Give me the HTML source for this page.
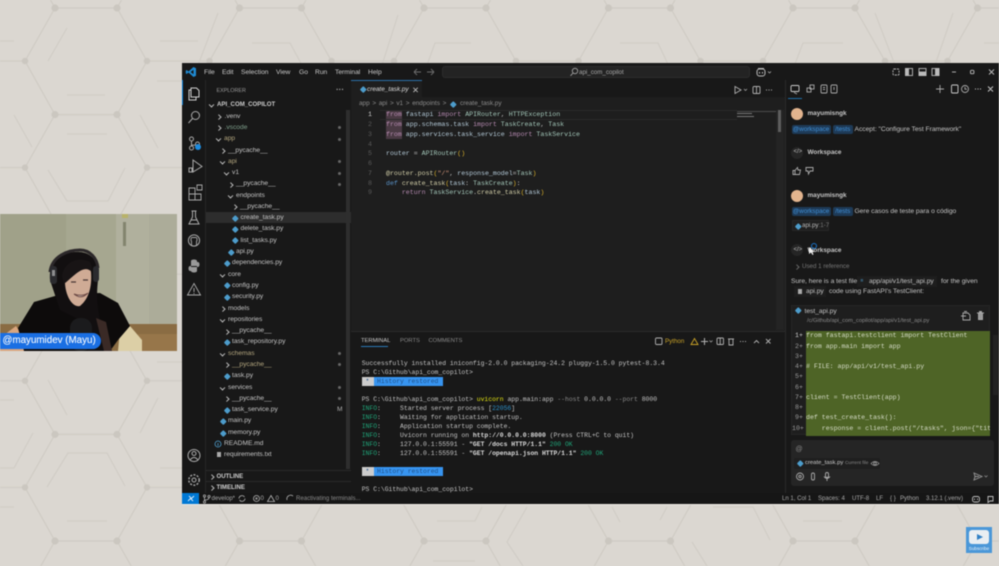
<!DOCTYPE html>
<html><head><meta charset="utf-8">
<style>
html,body{margin:0;padding:0;width:999px;height:566px;overflow:hidden;background:#dbd7d1}
#w{position:absolute;left:0;top:0;width:999px;height:566px;overflow:hidden;filter:blur(.4px);font-family:"Liberation Sans",sans-serif}
#tree{position:absolute;left:0;top:.5px;width:999px;height:0}
.a,.r,.t,.m{position:absolute;white-space:pre}
.box{position:absolute}
.r{height:12px;line-height:12px;font-size:6.65px;color:#c4c4c4;letter-spacing:0}
.hd{font-weight:bold;font-size:6.1px;color:#ccc}
.y{color:#b3a67f}
.gr{color:#7fa08c}
.c,.d{position:absolute;width:2.6px;height:2.6px;border-right:.8px solid #bbb;border-top:.8px solid #bbb}
.c{transform:rotate(45deg)}
.d{transform:rotate(135deg)}
.p{position:absolute;width:4.6px;height:4.6px;background:#4d9ccb;transform:rotate(45deg);border-radius:1px}
.g{position:absolute;left:338px;width:3.4px;height:3.4px;border-radius:50%;background:#666}
.m{font-family:"Liberation Mono",monospace;color:#c8c8c8}
.e{font-size:6.6px;line-height:10px;height:10px;left:386px}
.n{font-family:"Liberation Mono",monospace;font-size:6.6px;line-height:10px;height:10px;left:362px;width:10px;text-align:right;color:#5a5a5a;position:absolute}
.tm{font-size:6.4px;line-height:9px;height:9px;left:361.7px;color:#c4c4c4}
.cd{font-size:6.57px;line-height:10px;height:10px;left:806px;color:#d6dcc8}
.ln{font-family:"Liberation Mono",monospace;font-size:6.57px;line-height:10px;height:10px;left:795px;color:#9a9a9a;position:absolute}
.k{color:#b58ab0}.b{color:#5a93c9}.f{color:#d2cea8}.v{color:#b4cad8}.tl{color:#a4c8ba}.o{color:#d6ae2a}.i{color:#1fa67a}
.s{font-size:6.05px;color:#aaa;height:11px;line-height:11px;top:493.5px}
.h{position:absolute;left:361.7px;height:9px;background:#3794f0;width:81px}
.h i{position:absolute;left:0;top:0;width:12px;height:9px;background:#ccc}
.chip{position:absolute;background:#1e3a57;border-radius:2px;color:#3f8fd6;font-size:6.3px;height:9.5px;line-height:9.5px;text-align:center}
.ct{font-size:6.66px;color:#c4c4c4;height:11px;line-height:11px}
.mn{font-size:6.7px;line-height:11px;color:#c8c8c8;top:67px}
.nm{font-size:6.4px;font-weight:bold;color:#c4c4c4}
</style></head><body><div id="w">

<!-- Background -->
<svg class="box" style="left:0;top:0" width="999" height="566">
<defs><pattern id="hx" width="184.5" height="106.6" patternUnits="userSpaceOnUse" patternTransform="translate(0,8)">
<g stroke="#cfcbc4" stroke-width="1.2" fill="none">
<path d="M55 0H117L147 53L117 106.6H55L25 53Z"/><path d="M147 53H209.5M-37.5 53H25"/></g>
<g fill="#cbc7c0"><circle cx="55" cy="0" r="3.6"/><circle cx="117" cy="0" r="3.6"/><circle cx="55" cy="106.6" r="3.6"/><circle cx="117" cy="106.6" r="3.6"/><circle cx="25" cy="53" r="3.2"/><circle cx="147" cy="53" r="3.2"/></g>
</pattern></defs>
<rect width="999" height="566" fill="#dbd7d1"/>
<rect width="999" height="566" fill="url(#hx)"/>
<g stroke="#d1cdc6" stroke-width="1.2" fill="none">
<path d="M0 41H14M48 61L67 28M160 41L198 41M67 95H105M67 134H107M32 147L14 115M140 115L158 148M157 81H182M48 170L67 201H108L125 168"/>
<path d="M48 380L67 415M0 400H14M47 487L68 453H107L125 486M67 521H107M0 468H14M0 507H14M140 433L158 398M160 468H182M157 362H182M14 468L33 433"/>
<path d="M252 43H290L310 80M471 43H435L418 90M620 43H658L680 90M710 65H752M843 43H803L785 90M875 13L895 65M953 13L935 65M984 43H999M398 15L382 65M182 65H198L218 13"/>
<path d="M437 521H475L482 507M433 561H475M612 507L620 522M660 520L667 507M692 542L707 566M803 521H842M713 507H753L770 540M527 507L507 542L523 566"/>
</g></svg>

<!-- Webcam -->
<svg class="box" style="left:0;top:214px" width="177" height="137" viewBox="0 214 177 137">
<rect x="0" y="214" width="177" height="137" fill="#a0a189"/>
<rect x="66" y="214" width="50" height="115" fill="#a6a790"/>
<rect x="116" y="214" width="33" height="120" fill="#b0b09d"/>
<rect x="149" y="214" width="28" height="120" fill="#acac99"/>
<rect x="123" y="222" width="3" height="24" fill="#83846e"/>
<rect x="122" y="214" width="6" height="4" fill="#b8b26a"/>
<rect x="0" y="324" width="177" height="27" fill="#8a6c43"/>
<rect x="138" y="334" width="39" height="17" fill="#97764a"/>
<path d="M0 351V338L16 326L32 351Z" fill="#d9a67f"/>
<path d="M118 351L120 330L130 326L142 340V351Z" fill="#dccfa6"/>
<path d="M18 328L34 302L62 294L100 293L118 303L130 326L118 340L110 351H24Z" fill="#0d0b0b"/>
<path d="M50 280C48 258 66 251 80 252C94 253 100 265 98 280C97 290 96 300 100 320L108 351H88L80 320L60 310Z" fill="#120f10"/>
<path d="M96 318L104 351H112L106 322Z" fill="#3a2a26"/>
<path d="M65 278C66 272 72 270 76 270C84 268 90 266 91 272C92 284 90 298 80 306C72 308 64 294 65 278Z" fill="#cfab95"/>
<path d="M62 276C64 262 78 256 90 262C92 266 92 268 92 272C84 264 76 274 64 284Z" fill="#181415"/>
<path d="M50 272C52 256 68 250 80 250C90 250 97 258 98 268" fill="none" stroke="#2c282a" stroke-width="3"/>
<rect x="50" y="266" width="7" height="18" rx="3" fill="#2b2b2f"/><rect x="52" y="270" width="3" height="6" fill="#8e8e90"/><rect x="93" y="266" width="6" height="16" rx="3" fill="#2b2b2f"/>
<path d="M71 282H76M83 280H88" stroke="#4a3836" stroke-width="1.300" fill="none"/>
<path d="M74 294Q81 300 88 293Q82 297 74 294Z" fill="#efe3da" stroke="#6d4a45" stroke-width="1"/>
<rect x="70" y="318" width="22" height="33" rx="10" fill="#1b1b1d"/>
</svg>
<div class="box" style="left:0;top:333px;width:101px;height:16px;background:#1a6fe3;border-radius:0 8px 8px 0"></div>
<div class="a" style="left:2.5px;top:333px;line-height:16px;font-size:9.8px;color:#e8f0fb;text-shadow:0 0 .4px #e8f0fb">@mayumidev (Mayu)</div>

<!-- Subscribe -->
<div class="box" style="left:966px;top:527px;width:26px;height:26px;background:#4a97d8"></div>
<div class="box" style="left:969px;top:530px;width:20px;height:14px;background:#e9eef2;border-radius:3px"></div>
<div class="box" style="left:977px;top:534px;width:0;height:0;border-left:6px solid #2f7fc4;border-top:3px solid transparent;border-bottom:3px solid transparent"></div>
<div class="a" style="left:966px;top:545px;width:26px;text-align:center;font-size:4.6px;color:#e8f0f8;line-height:7px">Subscribe</div>

<!-- Window -->
<div class="box" style="left:182px;top:63px;width:817px;height:441px;background:#181818"></div>
<div class="box" style="left:351px;top:80px;width:434px;height:413px;background:#1e1e1e"></div>
<div class="box" style="left:351px;top:80px;width:434px;height:17px;background:#181818"></div>
<div class="box" style="left:351px;top:80px;width:71px;height:17px;background:#1e1e1e;border-top:1px solid #2b6ea8;box-sizing:border-box"></div>
<div class="box" style="left:351px;top:331px;width:434px;height:162px;background:#181818;border-top:1px solid #2a2a2a;box-sizing:border-box"></div>
<div class="box" style="left:785px;top:80px;width:214px;height:413px;background:#181818;border-left:1px solid #2a2a2a;box-sizing:border-box"></div>
<div class="box" style="left:182px;top:80px;width:24px;height:413px;background:#171717;border-right:1px solid #262626;box-sizing:border-box"></div>
<div class="box" style="left:182px;top:80px;width:1px;height:25px;background:#0078d4"></div>
<div class="box" style="left:206px;top:212px;width:145px;height:11px;background:#2d2d2d"></div>
<div class="box" style="left:346px;top:110px;width:4px;height:359px;background:#2e2e2e"></div>
<div class="box" style="left:776px;top:110px;width:8px;height:220px;background:#242424"></div>
<div class="box" style="left:778px;top:110px;width:3px;height:22px;background:#5e5e5e"></div>
<div class="box" style="left:737px;top:110.5px;width:39px;height:1.5px;background:#4a4a4a"></div>
<div class="box" style="left:737px;top:113px;width:15px;height:1px;background:#777"></div>
<div class="box" style="left:737px;top:116px;width:17px;height:1px;background:#777"></div>
<div class="box" style="left:206px;top:470px;width:145px;height:1px;background:#2a2a2a"></div>
<div class="box" style="left:206px;top:481px;width:145px;height:1px;background:#2a2a2a"></div>
<div class="box" style="left:182px;top:493px;width:817px;height:11px;background:#161616"></div>
<div class="box" style="left:182px;top:493px;width:17px;height:11px;background:#0078d4"></div>
<div class="box" style="left:182px;top:504px;width:817px;height:1px;background:#eeeae4"></div>

<!-- Title bar -->
<svg class="box" style="left:185px;top:66px" width="12" height="12" viewBox="0 0 12 12"><path d="M8.5 1L11 2.2V9.8L8.5 11L3.5 6.5L1.6 8L.8 7.4V4.6L1.6 4L3.5 5.5Z" fill="#1f8ad2"/><path d="M8.5 3.8L5.5 6L8.5 8.2Z" fill="#181818"/></svg>
<div class="a mn" style="left:204px">File</div>
<div class="a mn" style="left:222px">Edit</div>
<div class="a mn" style="left:241px">Selection</div>
<div class="a mn" style="left:276px">View</div>
<div class="a mn" style="left:299px">Go</div>
<div class="a mn" style="left:315px">Run</div>
<div class="a mn" style="left:335px">Terminal</div>
<div class="a mn" style="left:368px">Help</div>
<svg class="box" style="left:412px;top:67px" width="24" height="10" fill="none" stroke="#6c6c6c" stroke-width=".9"><path d="M2 5H9M2 5L5 2M2 5L5 8M15 5H22M22 5L19 2M22 5L19 8"/></svg>
<div class="box" style="left:442px;top:66px;width:308px;height:12px;background:#232323;border:1px solid #2c2c2c;box-sizing:border-box;border-radius:3px"></div>
<svg class="box" style="left:569px;top:67px" width="10" height="10" fill="none" stroke="#aaa" stroke-width=".8"><circle cx="6" cy="4" r="2.7"/><path d="M4 6L1.5 8.8"/></svg>
<div class="a" style="left:579px;top:66.5px;font-size:6.2px;line-height:11px;color:#a8a8a8">api_com_copilot</div>
<svg class="box" style="left:755px;top:66px" width="18" height="12" fill="none" stroke="#bbb" stroke-width="1"><rect x="2" y="3" width="8" height="7" rx="2.5"/><path d="M3 2.5H9"/><path d="M4.5 6v1.5M7.5 6v1.5" stroke-width="1.1"/><path d="M13 5.5L14.5 7L16 5.5" stroke-width=".7"/></svg>
<svg class="box" style="left:890px;top:66px" width="109" height="12" fill="none" stroke="#bbb" stroke-width=".9">
<rect x="3" y="3" width="6" height="6" rx="1" stroke-dasharray="2 1"/>
<rect x="15.5" y="2.5" width="7" height="7"/><rect x="15.5" y="2.5" width="3" height="7" fill="#bbb"/>
<rect x="29" y="2.5" width="7" height="7"/><rect x="29" y="6" width="7" height="3.5" fill="#bbb"/>
<rect x="42" y="2.5" width="7" height="7"/><rect x="45.5" y="2.5" width="3.5" height="7" fill="#bbb"/>
<path d="M62 6H66"/><rect x="80.5" y="4.3" width="3.4" height="3.4" rx="1"/><path d="M99 3.5L104 8.5M104 3.5L99 8.5"/></svg>

<!-- Activity bar -->
<svg class="box" style="left:182px;top:80px" width="24" height="413" viewBox="0 80 24 413" fill="none" stroke="#aaa" stroke-width="1">
<path d="M9 88H14.5L17 90.5V97H9ZM9 90H7V100H14V97" stroke="#d0d0d0"/>
<circle cx="13.5" cy="115.5" r="4"/><path d="M10.5 118.5L6.5 123"/>
<circle cx="9.5" cy="139" r="2"/><circle cx="9.5" cy="148" r="2"/><circle cx="15.5" cy="144" r="2"/><path d="M9.5 141V146M9.5 145Q15 145 15.5 146"/>
<circle cx="16" cy="147" r="3" fill="#1d8ce0" stroke="none"/>
<path d="M11 160L20 166.5L11 172ZM7 168H10V172H7Z"/>
<path d="M7 188H13V200H7ZM7 194H19V200H13M15 185H20V190H15Z" stroke-width=".9"/>
<path d="M9.5 211H14.5M10.5 211V217L7 224H17L13.5 217V211M9 220H15"/>
<circle cx="12" cy="240.5" r="5.6"/><path d="M9.5 245V241.5C8.5 240 9 237 10.5 237.5H13.5C15 237 15.5 240 14.5 241.5V245" stroke-width=".9"/>
<path d="M9 261C9 259 15 259 15 261V266H8C6 266 6 271 8 271H9Z" fill="#999" stroke="none"/><path d="M15 271C15 273 9 273 9 271V267H16C18 267 18 262 16 262H15Z" fill="#999" stroke="none"/>
<path d="M12 283.5L18.5 295H5.5ZM12 288V292M12 293V294" stroke-width=".9"/>
<circle cx="12" cy="455.5" r="6"/><circle cx="12" cy="453.5" r="2"/><path d="M8 460Q12 455 16 460" />
<circle cx="12" cy="480" r="2"/><circle cx="12" cy="480" r="5.2" stroke-dasharray="2 1.4" stroke-width="1.4"/>
</svg>

<!-- Explorer -->
<div id="tree">
<div class="r" style="left:216.5px;top:84px;font-size:5.4px;color:#9a9a9a">EXPLORER</div>
<div class="r" style="left:336px;top:83px;font-size:8px;color:#aaa;font-weight:bold">···</div>
<div class="r hd" style="left:217px;top:98.5px">API_COM_COPILOT</div><span class="d" style="left:210px;top:102px"></span>
<div class="r" style="left:224.5px;top:110px">.venv</div><span class="c" style="left:217px;top:114px"></span>
<div class="r gr" style="left:224.5px;top:121px">.vscode</div><span class="c" style="left:217px;top:125px"></span><i class="g" style="top:125.5px"></i>
<div class="r y" style="left:224px;top:132.7px">app</div><span class="d" style="left:216.5px;top:136px"></span><i class="g" style="top:137px"></i>
<div class="r" style="left:228px;top:144px">__pycache__</div><span class="c" style="left:221px;top:148px"></span>
<div class="r y" style="left:228px;top:155px">api</div><span class="d" style="left:221px;top:159px"></span><i class="g" style="top:159.5px"></i>
<div class="r" style="left:232px;top:166.5px">v1</div><span class="d" style="left:225px;top:170px"></span><i class="g" style="top:171px"></i>
<div class="r" style="left:236px;top:177.5px">__pycache__</div><span class="c" style="left:229px;top:182px"></span><i class="g" style="top:182.5px"></i>
<div class="r" style="left:236px;top:189px">endpoints</div><span class="d" style="left:229px;top:193px"></span>
<div class="r" style="left:240px;top:200px">__pycache__</div><span class="c" style="left:233px;top:204px"></span>
<div class="r" style="left:240.5px;top:211.5px">create_task.py</div><i class="p" style="left:233px;top:215px"></i>
<div class="r" style="left:240.5px;top:222.5px">delete_task.py</div><i class="p" style="left:233px;top:226px"></i>
<div class="r" style="left:240.5px;top:234px">list_tasks.py</div><i class="p" style="left:233px;top:237.5px"></i>
<div class="r" style="left:236px;top:245px">api.py</div><i class="p" style="left:229px;top:249px"></i>
<div class="r" style="left:232px;top:256px">dependencies.py</div><i class="p" style="left:225px;top:260px"></i>
<div class="r" style="left:228px;top:268px">core</div><span class="d" style="left:221px;top:272px"></span>
<div class="r" style="left:232px;top:279px">config.py</div><i class="p" style="left:225px;top:282.5px"></i>
<div class="r" style="left:232px;top:290px">security.py</div><i class="p" style="left:225px;top:294px"></i>
<div class="r" style="left:228px;top:302px">models</div><span class="c" style="left:221px;top:306px"></span>
<div class="r" style="left:228px;top:313px">repositories</div><span class="d" style="left:221px;top:317px"></span>
<div class="r" style="left:232px;top:324.5px">__pycache__</div><span class="c" style="left:225px;top:329px"></span>
<div class="r" style="left:232px;top:335.5px">task_repository.py</div><i class="p" style="left:225px;top:339px"></i>
<div class="r y" style="left:228px;top:347px">schemas</div><span class="d" style="left:221px;top:351px"></span><i class="g" style="top:351.5px"></i>
<div class="r y" style="left:232px;top:358px">__pycache__</div><span class="c" style="left:225px;top:362px"></span><i class="g" style="top:362.5px"></i>
<div class="r" style="left:232px;top:369px">task.py</div><i class="p" style="left:225px;top:373px"></i>
<div class="r" style="left:228px;top:381px">services</div><span class="d" style="left:221px;top:385px"></span><i class="g" style="top:385px"></i>
<div class="r" style="left:232px;top:392px">__pycache__</div><span class="c" style="left:225px;top:396px"></span><i class="g" style="top:396px"></i>
<div class="r" style="left:232px;top:403px">task_service.py</div><i class="p" style="left:225px;top:407px"></i>
<div class="r" style="left:337px;top:403px;color:#aaa">M</div>
<div class="r" style="left:228px;top:414.5px">main.py</div><i class="p" style="left:221px;top:418px"></i>
<div class="r" style="left:228px;top:426px">memory.py</div><i class="p" style="left:221px;top:430px"></i>
<div class="r" style="left:224px;top:437px">README.md</div>
<svg class="box" style="left:214px;top:439px" width="8" height="8" fill="none" stroke="#4d9ccb" stroke-width=".8"><circle cx="4" cy="4" r="3"/><path d="M4 3V6"/></svg>
<div class="r" style="left:224px;top:448.5px">requirements.txt</div>
<div class="box" style="left:216.5px;top:451px;width:4px;height:5px;background:#aaa"></div>
<div class="r hd" style="left:216.5px;top:470px">OUTLINE</div><span class="c" style="left:210px;top:474px"></span>
<div class="r hd" style="left:216.5px;top:481px">TIMELINE</div><span class="c" style="left:210px;top:485px"></span>
</div>

<!-- Tab -->
<i class="p" style="left:360.5px;top:87px"></i>
<div class="a" style="left:367px;top:84px;font-size:6.4px;font-style:italic;line-height:12px;color:#ddd">create_task.py</div>
<div class="a" style="left:412px;top:84px;font-size:8.5px;line-height:12px;color:#bbb">✕</div>
<svg class="box" style="left:732px;top:84px" width="44" height="12" fill="none" stroke="#b0b0b0" stroke-width=".9"><path d="M3 2.5L9 6L3 9.5Z"/><path d="M12 5L13.5 6.5L15 5" stroke-width=".7"/><rect x="21" y="2.5" width="7" height="7" rx="1"/><path d="M24.500 2.500V9.500"/><path d="M34 6h1M36.500 6h1M39 6h1"/></svg>
<div class="a" style="left:359px;top:98px;font-size:6.4px;word-spacing:.9px;line-height:12px;color:#8c8c8c">app &gt; api &gt; v1 &gt; endpoints &gt;</div>
<i class="p" style="left:451px;top:102px"></i>
<div class="a" style="left:460px;top:98px;font-size:6.4px;line-height:12px;color:#8c8c8c">create_task.py</div>

<!-- Code -->
<div class="n" style="top:110.3px;color:#ccc">1</div><div class="n" style="top:120px">2</div><div class="n" style="top:129.8px">3</div><div class="n" style="top:139.5px">4</div><div class="n" style="top:149.3px">5</div><div class="n" style="top:159px">6</div><div class="n" style="top:168.8px">7</div><div class="n" style="top:178.500px">8</div><div class="n" style="top:188.300px">9</div>
<div class="box" style="left:386px;top:110px;width:16px;height:29px;background:#4a3a44"></div>
<div class="box" style="left:380px;top:110px;width:357px;height:10px;border-top:1px solid #2a2a2a;border-bottom:1px solid #2a2a2a;box-sizing:border-box"></div>
<div class="m e" style="top:110.3px"><span class="k">from</span> <span class="v">fastapi</span> <span class="k">import</span> <span class="tl">APIRouter</span>, <span class="tl">HTTPException</span></div>
<div class="m e" style="top:120px"><span class="k">from</span> <span class="v">app.schemas.task</span> <span class="k">import</span> <span class="tl">TaskCreate</span>, <span class="tl">Task</span></div>
<div class="m e" style="top:129.8px"><span class="k">from</span> <span class="v">app.services.task_service</span> <span class="k">import</span> <span class="tl">TaskService</span></div>
<div class="m e" style="top:149.3px"><span class="v">router</span> = <span class="tl">APIRouter</span><span class="o">()</span></div>
<div class="m e" style="top:168.8px"><span class="f">@router</span><span class="f">.post</span><span class="o">(</span><span style="color:#ce9178">"/"</span>, <span class="v">response_model</span>=<span class="tl">Task</span><span class="o">)</span></div>
<div class="m e" style="top:178.5px"><span class="b">def</span> <span class="f">create_task</span><span class="o">(</span><span class="v">task</span>: <span class="tl">TaskCreate</span><span class="o">)</span>:</div>
<div class="m e" style="top:188.3px">    <span class="k">return</span> <span class="tl">TaskService</span>.<span class="f">create_task</span><span class="o">(</span><span class="v">task</span><span class="o">)</span></div>

<!-- Terminal -->
<div class="a" style="left:361px;top:336px;font-size:5.8px;line-height:11px;color:#ccc">TERMINAL</div>
<div class="box" style="left:361px;top:346px;width:27px;height:1px;background:#2b7ab8"></div>
<div class="a" style="left:400px;top:336px;font-size:5.8px;line-height:11px;color:#8a8a8a">PORTS</div>
<div class="a" style="left:428.500px;top:336px;font-size:5.8px;line-height:11px;color:#8a8a8a">COMMENTS</div>
<svg class="box" style="left:654px;top:336px" width="122" height="11" fill="none" stroke="#b0b0b0" stroke-width=".9"><rect x="1.500" y="2" width="6.500" height="6.500" rx="1"/><path d="M37 8.500L40.500 2.500L44 8.500Z" stroke="#c9a227"/><path d="M47 5.500H54M50.500 2V9" stroke-width="1"/><path d="M55.500 4.500L57 6L58.500 4.500" stroke-width=".7"/><rect x="63" y="2" width="6.500" height="6.500" rx="1"/><path d="M66.200 2V8.500"/><path d="M74 3H80M75 3V9H79V3"/><path d="M86 5.500h1M88.500 5.500h1M91 5.500h1M100 7L102.500 4.500L105 7M112 3L116.500 7.500M116.500 3L112 7.500"/></svg>
<div class="a" style="left:665px;top:336px;font-size:6.2px;line-height:11px;color:#c9a227">Python</div>

<div class="h" style="top:376.5px"><i></i></div><div class="h" style="top:466.5px"><i></i></div>
<div class="m tm" style="top:358.8px">Successfully installed iniconfig-2.0.0 packaging-24.2 pluggy-1.5.0 pytest-8.3.4</div>
<div class="m tm" style="top:367.800px">PS C:\Github\api_com_copilot&gt;</div>
<div class="m tm" style="top:376.500px;color:#1e4f85"> *  History restored</div>
<div class="m tm" style="top:394.800px">PS C:\Github\api_com_copilot&gt; <span style="color:#e5e510">uvicorn</span> app.main:app <span style="color:#8a8a8a">--host</span> 0.0.0.0 <span style="color:#8a8a8a">--port</span> 8000</div>
<div class="m tm" style="top:403.800px"><span class="i">INFO</span>:     Started server process [<span style="color:#2b90c8">22056</span>]</div>
<div class="m tm" style="top:412.800px"><span class="i">INFO</span>:     Waiting for application startup.</div>
<div class="m tm" style="top:421.800px"><span class="i">INFO</span>:     Application startup complete.</div>
<div class="m tm" style="top:430.800px"><span class="i">INFO</span>:     Uvicorn running on <b style="color:#ddd">http://0.0.0.0:8000</b> (Press CTRL+C to quit)</div>
<div class="m tm" style="top:439.800px"><span class="i">INFO</span>:     127.0.0.1:55591 - <b style="color:#ddd">"GET /docs HTTP/1.1"</b> <span class="i">200 OK</span></div>
<div class="m tm" style="top:448.800px"><span class="i">INFO</span>:     127.0.0.1:55591 - <b style="color:#ddd">"GET /openapi.json HTTP/1.1"</b> <span class="i">200 OK</span></div>
<div class="m tm" style="top:466.500px;color:#1e4f85"> *  History restored</div>
<div class="m tm" style="top:484.800px">PS C:\Github\api_com_copilot&gt;</div>

<!-- Chat -->
<svg class="box" style="left:785px;top:83px" width="214" height="13" fill="none" stroke="#aaa" stroke-width=".9">
<rect x="6" y="2.500" width="8" height="6" rx="1" stroke="#ccc"/><path d="M9 9.500L12 11"/><rect x="22" y="5" width="4" height="4"/><rect x="25" y="2" width="4" height="4"/><rect x="36" y="2" width="6" height="8" rx="1"/><path d="M38 4.500h2M38 6.500h2"/><rect x="46" y="2" width="6" height="8" rx="1"/><path d="M49 4V7"/>
<path d="M151 6H159M155 2V10"/><rect x="166.500" y="2" width="6.500" height="8" rx="1" stroke="#ccc"/><circle cx="180" cy="6" r="3.500"/><path d="M180 4V6.200H182"/><path d="M190 6h1M192.500 6h1M195 6h1M203 3.500L208 8.500M208 3.500L203 8.500" stroke="#ccc"/></svg>
<div class="box" style="left:788px;top:98px;width:14px;height:1px;background:#1e6da8"></div>

<div class="box" style="left:791px;top:108px;width:12px;height:12px;border-radius:50%;background:#e2b48e"></div>
<div class="a nm" style="left:807.500px;top:108px;line-height:12px">mayumisngk</div>
<div class="chip" style="left:791.500px;top:124.500px;width:39px">@workspace</div>
<div class="chip" style="left:833px;top:124.500px;width:19.500px">/tests</div>
<div class="a ct" style="left:854.500px;top:124px">Accept: "Configure Test Framework"</div>
<div class="box" style="left:791px;top:146.500px;width:12px;height:12px;border-radius:50%;background:#252525"></div>
<div class="a" style="left:793.500px;top:147px;font-size:6px;line-height:11px;color:#bbb">&lt;/&gt;</div>
<div class="a nm" style="left:807.500px;top:147px;line-height:11px">Workspace</div>
<svg class="box" style="left:792px;top:166px" width="24" height="10" fill="none" stroke="#aaa" stroke-width=".9"><path d="M1 4.500H3V8.500H1ZM3 4.500L5.500 1.500L6 4H8.500L7.500 8.500H3"/><path d="M14 1.500H21V5H18L16.500 8L16 5H14Z"/></svg>

<div class="box" style="left:791px;top:190px;width:12px;height:12px;border-radius:50%;background:#e2b48e"></div>
<div class="a nm" style="left:807.500px;top:190px;line-height:12px">mayumisngk</div>
<div class="chip" style="left:791.500px;top:206.500px;width:39px">@workspace</div>
<div class="chip" style="left:833px;top:206.500px;width:19.500px">/tests</div>
<div class="a ct" style="left:854.500px;top:206px">Gere casos de teste para o código</div>
<div class="box" style="left:792px;top:220px;width:37px;height:11px;background:#1f1f1f;border:1px solid #262626;box-sizing:border-box"></div>
<i class="p" style="left:795.500px;top:223.500px"></i>
<div class="a" style="left:802px;top:220px;font-size:6.200px;line-height:11px;color:#bbb">api.py<span style="color:#777">:1-7</span></div>
<div class="box" style="left:791px;top:244px;width:12px;height:12px;border-radius:50%;background:#252525"></div>
<div class="a" style="left:793.500px;top:244.500px;font-size:6px;line-height:11px;color:#bbb">&lt;/&gt;</div>
<div class="a nm" style="left:807.500px;top:245px;line-height:11px">Workspace</div>
<div class="box" style="left:811px;top:243px;width:6px;height:6px;border:1.500px solid #1772c9;border-radius:50%;box-sizing:border-box"></div>
<svg class="box" style="left:808px;top:247px" width="7" height="9"><path d="M1 0V7L3 5.500L4.500 8L5.500 7.500L4.500 5H6.500Z" fill="#eee"/></svg>
<span class="c" style="left:795px;top:265px;border-color:#666"></span>
<div class="a" style="left:802px;top:261px;font-size:6.200px;line-height:11px;color:#777">Used 1 reference</div>
<div class="a ct" style="left:791px;top:275.500px">Sure, here is a test file</div>
<div class="box" style="left:857px;top:276px;width:80px;height:11px;background:#1e1e1e"></div>
<div class="a" style="left:860.500px;top:275.500px;font-size:5px;line-height:11px;color:#4d9ccb">≡</div>
<div class="a ct" style="left:869px;top:275.500px">app/api/v1/test_api.py</div>
<div class="a ct" style="left:941px;top:275.500px">for the given</div>
<div class="box" style="left:794px;top:286px;width:32px;height:11px;background:#1e1e1e"></div>
<div class="box" style="left:798px;top:289px;width:4px;height:5px;background:#aaa"></div>
<div class="a ct" style="left:806px;top:286px">api.py</div>
<div class="a ct" style="left:829px;top:286px">code using FastAPI's TestClient:</div>

<div class="box" style="left:791px;top:305px;width:199px;height:130px;background:#1e1e1e;border:1px solid #252525;box-sizing:border-box"></div>
<i class="p" style="left:796px;top:308px"></i>
<div class="a ct" style="left:804.500px;top:305.500px">test_api.py</div>
<div class="a" style="left:807px;top:315.500px;font-size:5.700px;line-height:10px;color:#8a8a8a">/c/Github/api_com_copilot/app/api/v1/test_api.py</div>
<svg class="box" style="left:960px;top:310px" width="26" height="11" fill="none" stroke="#aaa" stroke-width=".9"><path d="M3 3H8L10 5V10H3Z"/><path d="M4 1.500H7M1 6H6"/><path d="M17 3H24M18.500 3V9.500H22.500V3M19.500 3V1.500H21.500V3" fill="#999"/></svg>
<div class="box" style="left:805.500px;top:330.500px;width:184.500px;height:105px;background:#4e6426"></div>
<div class="ln" style="top:331.300px;color:#ccc">1+</div><div class="ln" style="top:341.500px">2+</div><div class="ln" style="top:351.800px">3+</div><div class="ln" style="top:362px">4+</div><div class="ln" style="top:372.300px">5+</div><div class="ln" style="top:382.500px">6+</div><div class="ln" style="top:392.800px">7+</div><div class="ln" style="top:403px">8+</div><div class="ln" style="top:413.300px">9+</div><div class="ln" style="top:423.500px;left:792px">10+</div>
<div class="m cd" style="top:331.300px">from fastapi.testclient import TestClient</div>
<div class="m cd" style="top:341.500px">from app.main import app</div>
<div class="m cd" style="top:362px"># FILE: app/api/v1/test_api.py</div>
<div class="m cd" style="top:392.800px">client = TestClient(app)</div>
<div class="m cd" style="top:413.300px">def test_create_task():</div>
<div class="m cd" style="top:423.500px;width:184px;overflow:hidden">    response = client.post("/tasks", json={"tit</div>
<div class="box" style="left:993px;top:335px;width:5px;height:60px;background:#222"></div>

<div class="box" style="left:791px;top:440px;width:203px;height:46px;background:#252525;border-radius:3px"></div>
<div class="a" style="left:795.500px;top:444px;font-size:7px;line-height:12px;color:#888">@</div>
<div class="box" style="left:794px;top:458px;width:86px;height:11px;background:#1f1f1f;border-radius:2px"></div>
<i class="p" style="left:798px;top:461px"></i>
<div class="a" style="left:805px;top:458px;font-size:5.900px;line-height:11px;color:#ccc">create_task.py <span style="font-size:4.800px;color:#888">Current file</span></div>
<svg class="box" style="left:870px;top:459px" width="10" height="9" fill="none" stroke="#999" stroke-width=".8"><path d="M1 4.500Q5 .5 9 4.500Q5 8.500 1 4.500Z"/><circle cx="5" cy="4.500" r="1.300"/></svg>
<svg class="box" style="left:795px;top:471px" width="36" height="11" fill="none" stroke="#aaa" stroke-width=".9"><circle cx="5" cy="5.500" r="3.500"/><circle cx="5" cy="5.500" r="1.200"/><rect x="16.500" y="2" width="3" height="7" rx="1.500"/><rect x="30.500" y="1.500" width="3" height="5" rx="1.500"/><path d="M29 5.500Q32 9.500 35 5.500M32 8V10"/></svg>
<svg class="box" style="left:972px;top:471px" width="18" height="11" fill="none" stroke="#999" stroke-width=".9"><path d="M2 2L10 5.500L2 9L3 5.500ZM3 5.500H7"/><path d="M12.500 4.500L14 6L15.500 4.500" stroke-width=".7"/></svg>

<!-- Status -->
<svg class="box" style="left:186px;top:494px" width="10" height="9" fill="none" stroke="#dfeefc" stroke-width=".9"><path d="M2 7L5 4L3 2M8 2L5 5L7 7"/></svg>
<svg class="box" style="left:202px;top:494px" width="10" height="10" fill="none" stroke="#b5b5b5" stroke-width=".8"><circle cx="2.500" cy="2" r="1.100"/><circle cx="2.500" cy="8" r="1.100"/><circle cx="7" cy="2.500" r="1.100"/><path d="M2.500 3V7M2.500 6Q7 6 7 3.500"/></svg>
<div class="a s" style="left:211.500px">develop*</div>
<svg class="box" style="left:238px;top:494px" width="8" height="9" fill="none" stroke="#b5b5b5" stroke-width=".8"><path d="M1 4.500A3 3 0 0 1 6.500 3M7 4.500A3 3 0 0 1 1.500 6"/></svg>
<svg class="box" style="left:252px;top:494px" width="26" height="9" fill="none" stroke="#b5b5b5" stroke-width=".8"><circle cx="4.500" cy="4.500" r="3"/><path d="M3.500 3.500L5.500 5.500M5.500 3.500L3.500 5.500"/><path d="M19 1.500L22.500 7.500H15.500Z"/></svg>
<div class="a s" style="left:260.500px">0</div><div class="a s" style="left:275.500px">0</div>
<svg class="box" style="left:286px;top:494px" width="9" height="9" fill="none" stroke="#b5b5b5" stroke-width=".8"><path d="M1 6A3.800 3.800 0 0 1 7 2"/></svg>
<div class="a s" style="left:296px;color:#8a8a8a">Reactivating terminals...</div>
<div class="a s" style="left:782px">Ln 1, Col 1</div>
<div class="a s" style="left:818px">Spaces: 4</div>
<div class="a s" style="left:852px">UTF-8</div>
<div class="a s" style="left:876px">LF</div>
<div class="a s" style="left:890px">{ }</div>
<div class="a s" style="left:900px">Python</div>
<div class="a s" style="left:926px">3.12.1 (.venv)</div>
<svg class="box" style="left:971px;top:494px" width="26" height="10" fill="none" stroke="#c0c0c0" stroke-width=".9"><rect x="1.500" y="2.500" width="7" height="5.500" rx="2"/><path d="M3.500 4.500v1.500M6.500 4.500v1.500"/><path d="M17 2.500H22V7H19L17 8.500Z"/></svg>
</div></body></html>
